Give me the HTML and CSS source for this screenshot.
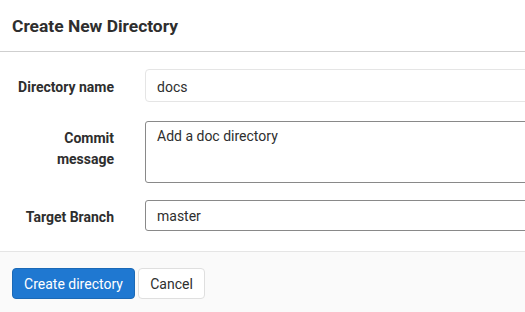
FILE: index.html
```html
<!DOCTYPE html>
<html lang="en">
<head>
  <meta charset="UTF-8" />
  <title>Create New Directory</title>
  <link rel="stylesheet" href="styles.css">
</head>
<body>
  <div class="modal">
    <div class="modal-header">
      <h3>Create New Directory</h3>
    </div>

    <form class="modal-body">
      <div class="form-row">
        <label for="dir_name">Directory name</label>
        <input id="dir_name" class="field field-light" type="text" value="docs">
      </div>
      <div class="form-row row-commit">
        <label for="commit_message">Commit<br>message</label>
        <textarea id="commit_message" class="field field-area">Add a doc directory</textarea>
      </div>
      <div class="form-row row-branch">
        <label for="branch_name">Target Branch</label>
        <input id="branch_name" class="field field-dark" type="text" value="master">
      </div>
    </form>

    <div class="modal-footer">
      <button class="btn btn-primary" type="button">Create directory</button>
      <button class="btn btn-cancel" type="button">Cancel</button>
    </div>
  </div>
</body>
</html>
```

FILE: styles.css
```css
body {
  margin: 0;
  font-family: Roboto, "Liberation Sans", Arial, sans-serif;
  color: #2e2e2e;
  background: #fff;
  overflow: hidden;
}

.modal {
  width: 525px;
  overflow: hidden;
}

.modal-header {
  height: 51px;
  border-bottom: 1px solid #cfcfcf;
  padding: 0 12px;
}

.modal-header h3 {
  margin: 0;
  font-size: 17.4px;
  font-weight: 700;
  line-height: 51px;
  padding-top: 1px;
}

.modal-body {
  padding: 17px 0 20px;
}

.form-row {
  display: flex;
  align-items: flex-start;
  margin-bottom: 19px;
}

.form-row.row-commit {
  margin-bottom: 17px;
}

.form-row.row-branch {
  margin-bottom: 0;
}

.form-row label {
  width: 114px;
  flex-shrink: 0;
  margin-right: 31px;
  text-align: right;
  font-size: 14px;
  font-weight: 700;
  line-height: 21px;
  padding-top: 8px;
}

.row-commit label {
  padding-top: 7px;
}

.row-branch label {
  padding-top: 7px;
}

.field {
  box-sizing: border-box;
  width: 420px;
  flex-shrink: 0;
  font-family: inherit;
  font-size: 14px;
  color: #2e2e2e;
  padding: 0 11px;
  background: #fff;
  outline: none;
}

.field-light {
  height: 33px;
  border: 1px solid #e5e5e5;
  border-radius: 4px;
  padding-top: 2px;
}

.field-area {
  height: 62px;
  border: 1px solid #898989;
  border-radius: 3px;
  padding-top: 5px;
  resize: none;
  line-height: 18px;
}

.field-dark {
  height: 31px;
  border: 1px solid #898989;
  border-radius: 3px;
}

.modal-footer {
  background: #fafafa;
  border-top: 1px solid #e5e5e5;
  padding: 16px 12px 13px;
  display: flex;
  gap: 3px;
}

.btn {
  box-sizing: border-box;
  height: 31px;
  padding: 0 11px;
  font-family: inherit;
  font-size: 14px;
  border-radius: 4px;
}

.btn-primary {
  background: #1f78d1;
  border: 1px solid #1b69b6;
  color: #fff;
  width: 123px;
}

.btn-cancel {
  background: #fff;
  border: 1px solid #dfdfdf;
  color: #2e2e2e;
  width: 67px;
}
```
